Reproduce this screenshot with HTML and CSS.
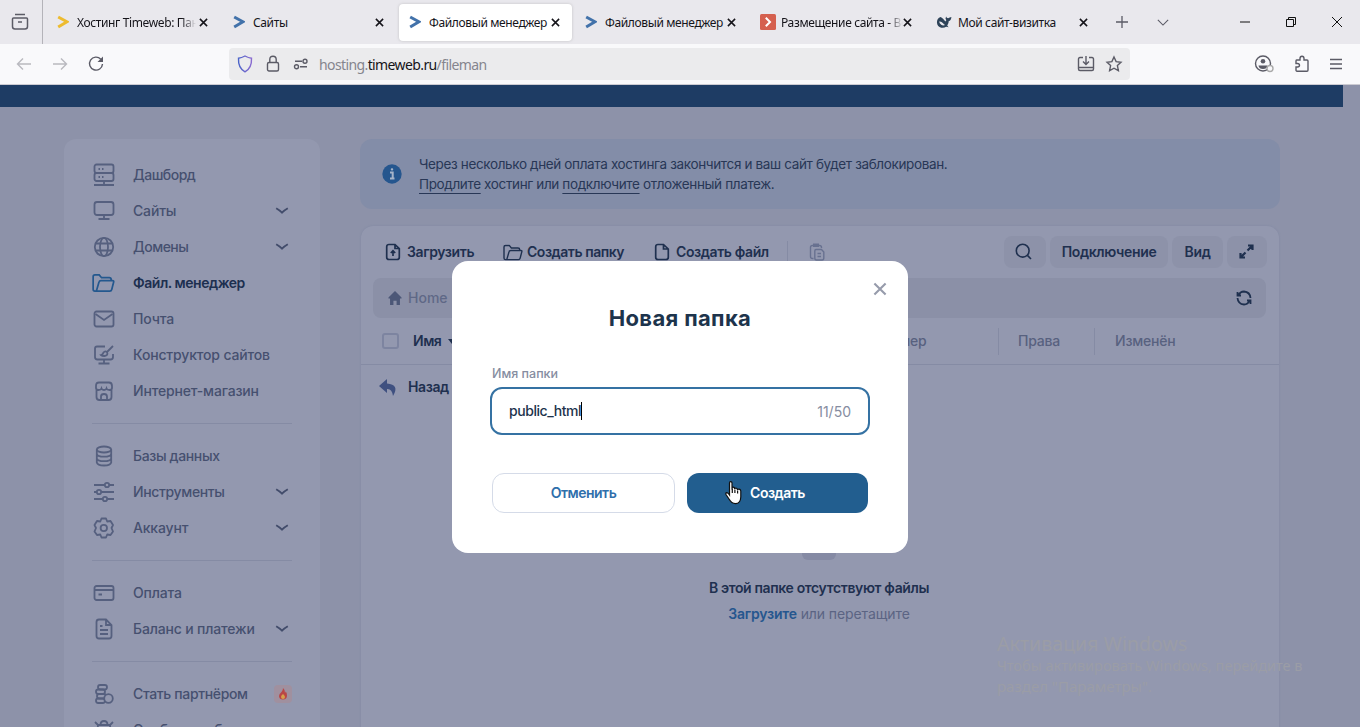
FILE: index.html
```html
<!DOCTYPE html>
<html lang="ru">
<head>
<meta charset="utf-8">
<title>Файловый менеджер</title>
<link rel="stylesheet" href="styles.css">
</head>
<body>
<svg class="sprite" aria-hidden="true">
  <symbol id="x" viewBox="0 0 10 10"><path d="M1 1l8 8M9 1L1 9"/></symbol>
  <symbol id="chev" viewBox="0 0 14 8"><path d="M1.2 1.3Q4.5 3.2 7 5.7Q9.500 3.200 12.800 1.300"/></symbol>
  <symbol id="tw" viewBox="0 0 12 14"><path d="M1.200 2L10 6.800L1.200 12"/></symbol>
  <symbol id="folder" viewBox="0 0 24 20"><path d="M4.500 18.500H3Q1.200 18.500 1.200 16.500V3.500Q1.200 1.500 3 1.500H7.500L10 4.500H18Q20 4.500 20 6.500V7.500M4.500 18.500L7.300 9Q7.700 7.500 9.300 7.500H21.500Q23 7.500 22.600 9L20.600 16.800Q20.200 18.500 18.500 18.500Z"/></symbol>
</svg>

<div class="browser">
  <div class="tabbar">
    <div class="recent"><svg width="18" height="18" viewBox="0 0 18 18"><path d="M4 1.500H14M2.500 5H15.500Q16.500 5 16.500 6V13.500Q16.500 16 14 16H4Q1.500 16 1.500 13.500V6Q1.500 5 2.500 5ZM7 9H11"/></svg></div>
    <div class="tab"><svg class="fav yellow"><use href="#tw"/></svg><span class="tab-title fade">Хостинг Timeweb: Панель</span><svg class="close"><use href="#x"/></svg></div>
    <div class="tab"><svg class="fav"><use href="#tw"/></svg><span class="tab-title">Сайты</span><svg class="close"><use href="#x"/></svg></div>
    <div class="tab active"><svg class="fav"><use href="#tw"/></svg><span class="tab-title">Файловый менеджер</span><svg class="close"><use href="#x"/></svg></div>
    <div class="tab"><svg class="fav"><use href="#tw"/></svg><span class="tab-title">Файловый менеджер</span><svg class="close"><use href="#x"/></svg></div>
    <div class="tab wide"><svg class="fav-red" width="16" height="16" viewBox="0 0 16 16"><rect width="16" height="16" rx="1.500"/><path d="M5.800 3.800L10 8L5.800 12.200"/></svg><span class="tab-title fade">Размещение сайта - Beget</span><svg class="close"><use href="#x"/></svg></div>
    <div class="tab wide"><svg class="fav-whale" width="16" height="13" viewBox="0 0 16 14"><path d="M4.500 1Q.2 2.500.4 7Q.8 11.500 5 12.600Q8 13.200 10.300 11.700L13 12Q11.700 11 11.500 10.300Q13.300 8 13 5.700Q15.500 5 16 1Q14 1.200 12.400 2.500Q10.700 2 10.300.5Q8.800 2.500 10.500 4.700L9.500 6Q7 2 4.500 1Z"/><path class="cut" d="M2.800 6Q5 5.500 7 7.800Q7.800 9 9.200 9.800Q7 11 5 9.500Q3 8 2.800 6Z"/></svg><span class="tab-title">Мой сайт-визитка</span><svg class="close"><use href="#x"/></svg></div>
    <svg class="plus" width="12" height="12" viewBox="0 0 12 12"><path d="M6 0V12M0 6H12"/></svg>
    <svg class="tabs-down" width="12" height="7" viewBox="0 0 14 8"><path d="M1 1L7 7L13 1"/></svg>
    <div class="winbtns">
      <svg width="10" height="10" viewBox="0 0 10 10"><path d="M0 5H10"/></svg>
      <svg width="10" height="10" viewBox="0 0 10 10"><path d="M.5 2.500H7.500V9.500H.5ZM2.500 2.500V.5H9.500V7.500H7.500"/></svg>
      <svg width="10" height="10" viewBox="0 0 10 10"><path d="M0 0L10 10M10 0L0 10"/></svg>
    </div>
  </div>
  <div class="toolbar">
    <svg class="nav dim" width="16" height="16" viewBox="0 0 16 16"><path d="M7 2.500L1.500 8L7 13.500M1.500 8H15"/></svg>
    <svg class="nav dim" width="16" height="16" viewBox="0 0 16 16"><path d="M9 2.500L14.500 8L9 13.500M14.500 8H1"/></svg>
    <svg class="nav" width="16" height="16" viewBox="0 0 16 16"><path d="M12.800 3.200A6.500 6.500 0 1 0 14.500 8"/><path class="solid" d="M15 .5V6H9.500Z"/></svg>
    <div class="urlbar">
      <svg class="shield" width="16" height="18" viewBox="0 0 16 18"><defs><linearGradient id="sg" x2="1"><stop stop-color="#4a63c9"/><stop offset="1" stop-color="#8a6bd0"/></linearGradient></defs><path d="M8 1Q11.500 3 14.500 3.200Q15 13 8 16.800Q1 13 1.500 3.200Q4.500 3 8 1Z"/></svg>
      <svg width="14" height="18" viewBox="0 0 14 18"><rect x="1.500" y="7.500" width="11" height="8.500" rx="1.500"/><path d="M3.800 7.500V4.500Q3.800 1.200 7 1.200Q10.200 1.200 10.200 4.500V7.500"/></svg>
      <svg width="16" height="12" viewBox="0 0 16 12"><path d="M2 3.200H9M7 8.800H14"/><circle cx="12" cy="3.200" r="2"/><circle cx="3.500" cy="8.800" r="2"/></svg>
      <span class="url">hosting.<b>timeweb.ru</b>/fileman</span>
      <svg class="install" width="18" height="16" viewBox="0 0 18 16"><path d="M6 1.500H3Q1.500 1.500 1.500 3V13Q1.500 14.500 3 14.500H15Q16.500 14.500 16.500 13V3Q16.500 1.500 15 1.500H12M1.500 11.500H16.500M9 0V8M6 5.500L9 8.500L12 5.500"/></svg>
      <svg width="16" height="16" viewBox="0 0 16 16"><path d="M8 1L10.100 5.600L15 6.200L11.400 9.600L12.400 14.700L8 12.200L3.600 14.700L4.600 9.600L1 6.200L5.900 5.600Z"/></svg>
    </div>
    <div class="tools">
      <svg width="20" height="18" viewBox="0 0 20 18"><circle cx="9" cy="8.500" r="7.500"/><circle class="solid" cx="9" cy="6.200" r="2.300"/><path class="solid" d="M4.500 10.500H13.500Q13 14 9 14Q5 14 4.500 10.500Z"/><circle class="status" cx="16" cy="13.500" r="3"/></svg>
      <svg width="16" height="18" viewBox="0 0 16 18"><path d="M2.500 5H6V3.500Q6 1.200 8 1.200Q10 1.200 10 3.500V5H13Q14 5 14 6V15Q14 16.200 13 16.200H3Q2 16.200 2 15V12H3.500Q5.500 12 5.500 10.300Q5.500 8.500 3.500 8.500H2V6Q2 5 2.500 5Z"/></svg>
      <svg width="12" height="12" viewBox="0 0 12 12"><path d="M0 1.500H12M0 6H12M0 10.500H12"/></svg>
    </div>
  </div>
</div>

<div class="page">
  <div class="site-header"></div>
  <div class="columns">
    <nav class="sidebar">
      <a class="item tight"><svg class="ico" viewBox="0 0 22 24"><rect x="1.500" y="1.500" width="19" height="8.500" rx="2"/><rect x="1.500" y="10" width="19" height="8" rx="2"/><path d="M11 18V22M1 22H21M5.500 6H7M9 6H10.500M5.500 14H7M9 14H10.500"/></svg><span>Дашборд</span></a>
      <a class="item"><svg class="ico" viewBox="0 0 22 24"><rect x="1.500" y="3" width="19" height="13" rx="2.500"/><path d="M11 16V20M5.500 20H16.500"/></svg><span>Сайты</span><svg class="chev"><use href="#chev"/></svg></a>
      <a class="item tight"><svg class="ico" viewBox="0 0 22 24"><circle cx="11" cy="12" r="9.200"/><ellipse cx="11" cy="12" rx="4" ry="9.200"/><path d="M3 8.500H19M3 15.500H19"/></svg><span>Домены</span><svg class="chev"><use href="#chev"/></svg></a>
      <a class="item current tight"><svg class="ico" viewBox="0 0 24 20"><use href="#folder"/></svg><span>Файл. менеджер</span></a>
      <a class="item"><svg class="ico" viewBox="0 0 22 24"><rect x="1.500" y="4.500" width="19" height="15" rx="2"/><path d="M2.500 7L11 13L19.500 7"/></svg><span>Почта</span></a>
      <a class="item"><svg class="ico" viewBox="0 0 22 24"><path d="M12 3.500H4Q2 3.500 2 5.500V14Q2 16.500 4.500 16.500H17.500Q20 16.500 20 14V11M11 16.500V20.500M5.500 20.500H16.500M20 3L14.500 8.500M11.500 13Q9 13 8 12Q10 11.500 10.500 9.500Q12 7.500 14 9Q15.500 12.500 11.500 13Z"/></svg><span>Конструктор сайтов</span></a>
      <a class="item"><svg class="ico" viewBox="0 0 22 24"><path d="M3.500 11V18Q3.500 21 6.500 21H15.500Q18.500 21 18.500 18V11M8 21V17.500Q8 15 11 15Q14 15 14 17.500V21M3 7Q3 3.500 6 3.500H16Q19 3.500 19 7V9Q19 11 16.500 11Q14 11 13.500 9.500Q13 11 11 11Q9 11 8.500 9.500Q8 11 5.500 11Q3 11 3 9Z"/></svg><span>Интернет-магазин</span></a>
      <hr>
      <a class="item snug"><svg class="ico" viewBox="0 0 22 24"><ellipse cx="11" cy="5.500" rx="7.200" ry="3"/><path d="M3.800 5.500V18.500Q4.500 21.500 11 21.500Q17.500 21.500 18.200 18.500V5.500M3.800 10Q4.500 12.700 11 12.700Q17.500 12.700 18.200 10M3.800 14.500Q4.500 17.200 11 17.200Q17.500 17.200 18.200 14.500"/></svg><span>Базы данных</span></a>
      <a class="item snug"><svg class="ico" viewBox="0 0 22 24"><path d="M1 5H11.500M16.500 5H21M1 12H4M9 12H21M1 19H9.500M14.500 19H21"/><circle cx="14" cy="5" r="2.200"/><circle cx="6" cy="12" r="2.200"/><circle cx="12" cy="19" r="2.200"/></svg><span>Инструменты</span><svg class="chev"><use href="#chev"/></svg></a>
      <a class="item"><svg class="ico" viewBox="0 0 22 24"><path stroke-linejoin="round" d="M8.500 2.500H13L14.200 5.500L17.500 5L20 9L18.500 12L20 15.500L17.500 19L14.200 18.500L13 21.500H8.500L7.300 18.500L4 19L1.500 15.500L3 12L1.500 9L4 5L7.300 5.500Z"/><circle cx="10.800" cy="12" r="3.200"/></svg><span>Аккаунт</span><svg class="chev"><use href="#chev"/></svg></a>
      <hr>
      <a class="item"><svg class="ico" viewBox="0 0 22 24"><rect x="1.500" y="5" width="19" height="14" rx="2"/><path d="M2 9H20M5.500 13.500H9"/></svg><span>Оплата</span></a>
      <a class="item"><svg class="ico" viewBox="0 0 22 24"><path d="M13 2.500H6Q3.500 2.500 3.500 5V19Q3.500 21.500 6 21.500H16Q18.500 21.500 18.500 19V8ZM13 2.500V8H18.500M7 9H9.500M7 13H15M7 17H15"/></svg><span>Баланс и платежи</span><svg class="chev"><use href="#chev"/></svg></a>
      <hr>
      <a class="item snug"><svg class="ico" viewBox="0 0 22 24"><rect x="5" y="3" width="9" height="4.500" rx="2.200"/><rect x="3" y="7.500" width="9" height="4.500" rx="2.200"/><rect x="4" y="12" width="9" height="4.500" rx="2.200"/><rect x="3" y="16.500" width="9" height="4.500" rx="2.200"/><circle class="over" cx="15.500" cy="16.500" r="4.300"/></svg><span>Стать партнёром</span><i class="hot"><svg width="10" height="12" viewBox="0 0 10 12"><path class="fl1" d="M5 0Q5 2.500 3.500 4Q1 5.800 1 8Q1.200 11.500 5 11.500Q9 11.300 9 7.500Q9 5 7.800 3.500L7 5Q7 1.500 5 0Z"/><path class="fl2" d="M5 6Q3 7.500 3 9Q3.200 11 5 11Q7 10.800 7 9Q6.800 7.500 5 6Z"/></svg></i></a>
      <a class="item"><svg class="ico" viewBox="0 0 22 24"><path d="M2 4L5 7H17L20 4M7.500 7Q7.500 3 11 3Q14.500 3 14.500 7M5 7Q3.500 20 11 21Q18.500 20 17 7M1.500 12H5M17 12H20.500M11 11V20"/></svg><span>Сообщить об</span></a>
    </nav>

    <main class="content">
      <div class="notice">
        <svg width="20" height="20" viewBox="0 0 20 20"><circle cx="10" cy="10" r="9.700"/><path d="M8 8.500H10.700V14.500M8 14.500H12.500"/><rect x="8.800" y="4.200" width="2.400" height="2.400" rx="1"/></svg>
        <p>Через несколько дней оплата хостинга закончится и ваш сайт будет заблокирован.<br><u>Продлите</u> хостинг или <u>подключите</u> отложенный платеж.</p>
      </div>
      <section class="files">
        <div class="actions">
          <a class="act upload"><svg width="16" height="18" viewBox="0 0 16 18"><path d="M10 1.500H4Q1.700 1.500 1.700 3.800V14.200Q1.700 16.500 4 16.500H12Q14.300 16.500 14.300 14.200V5.500ZM10 1.500V5.500H14.300M8 13V8M5.800 10L8 7.800L10.200 10"/></svg><span>Загрузить</span></a>
          <a class="act mkdir"><svg width="20" height="17" viewBox="0 0 24 20"><use href="#folder"/></svg><span>Создать папку</span></a>
          <a class="act mkfile"><svg width="16" height="18" viewBox="0 0 16 18"><path d="M9.500 1.500H4Q1.700 1.500 1.700 3.800V14.200Q1.700 16.500 4 16.500H12Q14.300 16.500 14.300 14.200V6ZM9.500 1.500V6H14.300"/></svg><span>Создать файл</span></a>
          <i class="sep"></i>
          <svg class="paste" width="16" height="18" viewBox="0 0 16 18"><path d="M4.500 15.500H3.500Q1.500 15.500 1.500 13.500V4.500Q1.500 2.500 3.500 2.500H10.500Q12.500 2.500 12.500 4.500V5M7 6.500H12.500L14.800 9V15Q14.800 17 13 17H7.500Q5.800 17 5.800 15V8Q5.800 6.500 7 6.500ZM8.500 10.500H12M8.500 13.500H12"/><path class="solid" d="M4 .5H10V4H4Z"/></svg>
          <div class="buttons">
            <button class="btn b1"><svg width="17" height="17" viewBox="0 0 17 17"><circle cx="7.700" cy="7.700" r="6.400"/><path d="M12.400 12.400L16 16"/></svg></button>
            <button class="btn b2">Подключение</button>
            <button class="btn b3">Вид</button>
            <button class="btn b4"><svg class="expand" width="15" height="15" viewBox="0 0 15 15"><path d="M8.500 6.500L13 2M9 1.500H13.500V6M6.500 8.500L2 13M1.500 9V13.500H6"/></svg></button>
          </div>
        </div>
        <div class="path">
          <svg width="14" height="14" viewBox="0 0 14 15"><path d="M7 0L0 7V8H1.700V15H5.300V10.500H8.700V15H12.300V8H14V7Z"/></svg><span>Home</span>
          <svg class="refresh" width="16" height="16" viewBox="0 0 16 16"><path d="M2.500 5.500Q4 1.500 8 1.500Q14 2 14.500 8M13.500 10.500Q12 14.500 8 14.500Q2 14 1.500 8M1.500 2V5.500H5M14.500 14V10.500H11"/></svg>
        </div>
        <div class="thead">
          <i class="check"></i><b>Имя</b><i class="sort"></i>
          <span class="c-size">Размер</span><span class="c-perm">Права</span><span class="c-mod">Изменён</span>
        </div>
        <div class="back"><svg width="18" height="17" viewBox="0 0 18 17"><path d="M8 0L0 7L8 14V10Q13 9.500 14 17Q21 5.500 8 4.500Z"/></svg><span>Назад</span></div>
        <div class="empty">
          <i class="tile"></i>
          <b>В этой папке отсутствуют файлы</b>
          <p><strong>Загрузите</strong> или перетащите</p>
        </div>
      </section>
    </main>
  </div>
</div>

<div class="dialog">
  <svg class="dialog-close"><use href="#x"/></svg>
  <h1>Новая папка</h1>
  <label>Имя папки</label>
  <div class="field"><span class="value">public_html</span><i class="caret"></i><span class="count">11/50</span></div>
  <div class="choices"><button class="cancel">Отменить</button><button class="create">Создать</button></div>
</div>
<svg class="pointer" width="17" height="24" viewBox="0 0 17 24"><path d="M4.500 2Q4.500.7 5.700.7Q7 .7 7 2V8.500L7.300 6.300Q9.300 5.800 9.600 7.500Q11.800 6.500 12.400 8.500Q15.500 7.500 15.800 10V16Q15.500 22.700 10.500 22.700Q6.500 22.500 4 18L1 13.500Q.3 12 1.800 11.700Q3 11.700 4.500 14Z"/><path class="fingers" d="M7.300 8V12M9.900 8.500V12M12.600 9.500V12.500"/></svg>
<div class="watermark"><p class="w1">Активация Windows</p><p class="w2">Чтобы активировать Windows, перейдите в</p><p class="w3">раздел "Параметры".</p></div>
</body>
</html>
```

FILE: styles.css
```css
* { box-sizing: border-box; }
body { margin: 0; width: 1360px; height: 727px; overflow: hidden; background: #8d92a9; font-family: Inter, "Open Sans", sans-serif; position: relative; }
p { margin: 0; }
svg { fill: none; stroke: currentColor; flex: none; overflow: visible; }
.sprite { display: none; }
i { display: block; }
button { border: 0; padding: 0; font-family: inherit; }

/* Browser window */
.browser { font-family: "Noto Sans", sans-serif; color: #15141a; }
.tabbar { height: 44px; background: #e9e8ed; display: flex; align-items: center; }
.recent { width: 43px; height: 44px; border-right: 1px solid #b4b3b9; display: grid; place-items: center; margin-right: 4px; padding-right: 3px; color: #5b5b66; }
.recent svg { stroke-width: 1.5; margin-left: 1px; }
.tab { width: 173px; height: 37px; margin-right: 3px; padding-left: 10px; padding-right: 12px; display: flex; align-items: center; border-radius: 4px; font-size: 12px; }
.tab.active { background: #fff; box-shadow: 0 0 3px #8886; }
.tab.wide { padding-left: 9px; }
.fav { width: 12px; height: 14px; stroke: #4272aa; stroke-width: 3; margin-right: 8px; }
.fav.yellow { stroke: #edbb2f; }
.tab-title { width: 119px; white-space: nowrap; overflow: hidden; letter-spacing: -.37px; padding-top: 1px; }
.tab-title.fade { mask-image: linear-gradient(90deg, #000 88%, transparent); }
.close { width: 9px; height: 9px; margin-left: auto; stroke-width: 1.7; }
.fav-red { margin-right: 5px; }
.fav-red rect { fill: #d5604f; stroke: none; }
.fav-red path { stroke: #fff; stroke-width: 2; }
.fav-whale { margin-right: 6px; fill: #2d4258; stroke: none; }
.fav-whale .cut { fill: #e9e8ed; }
.wide .tab-title { width: 122px; }
.plus { margin-left: 13px; color: #5b5b66; stroke-width: 1.3; }
.tabs-down { margin-left: 29px; color: #5b5b66; stroke-width: 1.3; }
.winbtns { display: flex; gap: 36px; margin-left: auto; margin-right: 18px; color: #111; }
.toolbar { height: 41px; background: #f9f9fb; border-bottom: 1px solid #cccbd2; display: flex; align-items: center; padding: 0 18px 0 16px; color: #5b5b66; }
.nav { margin-right: 20px; }
.nav.dim { color: #b9b9bf; }
.toolbar svg { stroke-width: 1.4; }
.urlbar { width: 901px; height: 32px; margin-left: 105px; border-radius: 4px; background: #ebebed; display: flex; align-items: center; padding: 0 8px; gap: 12px; }
.urlbar .shield { stroke: url(#sg); }
.urlbar svg:nth-child(2) { margin-left: 1px; margin-right: 1px; }
.url { font-size: 14px; color: #85858d; letter-spacing: -.61px; margin-left: -2px; padding-top: 1px; }
.url b { font-weight: 400; color: #15141a; }
.install { margin-left: auto; margin-right: -1px; }
.tools { display: flex; align-items: center; gap: 20px; margin-left: auto; }
.solid { fill: currentColor; stroke: none; }
.status { stroke: #aaa; fill: #f9f9fb; }

/* Site page under the modal shade */
.site-header { width: 1343px; height: 22px; background: #1e3c64; }
.columns { display: flex; gap: 40px; padding: 32px 80px 0 64px; height: 620px; overflow: hidden; align-items: flex-start; }
.sidebar { width: 256px; height: 700px; flex: none; background: #9398af; border-radius: 12px; padding: 18px 28px; color: #56607f; }
.item { height: 36px; display: flex; align-items: center; font-size: 14px; font-weight: 500; color: #46506f; white-space: nowrap; letter-spacing: -.17px; }
.item span { padding-bottom: 2px; }
.item.snug { letter-spacing: -.36px; }
.item.tight { letter-spacing: -.5px; }
.ico { width: 22px; height: 24px; margin-left: 1px; margin-right: 18px; color: #56607f; stroke-width: 1.8; }
.item.current { color: #1d2f4f; font-weight: 600; letter-spacing: -.46px; }
.current .ico { color: #24588e; width: 23px; height: 20px; margin-left: 0; stroke-width: 1.8; }
.chev { width: 14px; height: 8px; margin-left: auto; margin-right: 3px; stroke-width: 1.9; color: #424c6b; }
.sidebar hr { border: 0; height: 1px; background: #858ba4; margin: 14px 0; }
.over { fill: #9398af; }
.hot { width: 18px; height: 18px; border-radius: 4px; background: #a0909f; margin-left: auto; display: grid; place-items: center; }
.fl1 { fill: #ba4646; stroke: none; }
.fl2 { fill: #d6a04c; stroke: none; }
.content { width: 920px; flex: none; }
.notice { height: 70px; border-radius: 12px; background: #838da8; display: flex; align-items: center; padding-left: 22px; font-size: 13.500px; line-height: 20px; color: #283756; }
.notice svg { margin-right: 17px; fill: #25568e; stroke: none; }
.notice svg path { stroke: #a6b4c9; stroke-width: 2; fill: none; }
.notice svg rect { fill: #a6b4c9; }
.notice p { white-space: nowrap; letter-spacing: -.36px; }
.notice u { text-underline-offset: 4px; text-decoration-skip-ink: none; }
.files { margin: 17px 1px 0; height: 600px; background: #9398af; border-radius: 12px; box-shadow: 0 0 2px #7f86a2; padding-top: 10px; color: #1f304f; font-size: 14px; }
.actions { height: 32px; display: flex; align-items: center; padding: 0 12px 0 24px; font-weight: 600; white-space: nowrap; letter-spacing: -.4px; }
.act { display: flex; align-items: center; gap: 6px; }
.act span { padding-bottom: 2px; }
.act svg { stroke-width: 1.7; }
.upload { width: 118px; }
.mkdir { width: 151px; gap: 4px; letter-spacing: -.47px; }
.mkfile { width: 133px; }
.sep { width: 1px; height: 22px; background: #858ba4; margin-right: 21px; }
.paste { color: #687190; stroke-width: 1.4; }
.buttons { display: flex; gap: 4px; margin-left: auto; }
.btn { height: 32px; border-radius: 8px; background: #8d92a9; color: inherit; font-size: 14px; font-weight: 600; display: grid; place-items: center; letter-spacing: -.36px; padding-bottom: 1px; }
.btn svg { stroke-width: 1.6; }
.btn .expand { stroke-width: 2.200; }
.b1 { width: 42px; padding-right: 3px; } .b2 { width: 118px; } .b3 { width: 51px; } .b4 { width: 40px; padding-right: 1px; }
.path { margin: 10px 13px 0 12px; height: 40px; border-radius: 8px; background: #8b90a7; display: flex; align-items: center; padding: 0 14px 0 15px; color: #5f6886; font-weight: 500; }
.path span { padding-bottom: 2px; }
.path svg:first-child { fill: #4c5777; stroke: none; margin-right: 6px; }
.refresh { margin-left: auto; color: #1f304f; stroke-width: 1.8; }
.thead { height: 47px; border-bottom: 1px solid #858ba4; display: flex; align-items: center; padding-left: 21px; color: #58617f; font-weight: 500; letter-spacing: -.2px; }
.thead b { color: #1f304f; font-weight: 600; margin-left: 14px; width: 35px; padding-bottom: 1px; letter-spacing: -.5px; }
.check { width: 17px; height: 16px; border: 2px solid #7d84a0; border-radius: 3px; }
.sort { border: 4px solid transparent; border-top: 5px solid #1f304f; border-bottom: 0; }
.c-size { margin-left: 60px; width: 482px; padding-left: 360px; }
.c-size, .c-perm, .c-mod { height: 27px; line-height: 25px; }
.c-perm { border-left: 1px solid #858ba4; width: 96px; padding-left: 19px; }
.c-mod { border-left: 1px solid #858ba4; padding-left: 20px; }
.back { height: 44px; display: flex; align-items: center; gap: 11px; padding-left: 18px; font-weight: 600; letter-spacing: -.4px; }
.back svg { fill: #3f5080; stroke: none; }
.back span { padding-bottom: 1px; }
.empty { text-align: center; padding-top: 117px; padding-right: 2px; font-size: 14px; color: #5b6483; }
.tile { width: 34px; height: 34px; border-radius: 6px; background: #858aa4; margin: 0 auto 18px; }
.empty b { display: block; height: 20px; line-height: 20px; color: #1f304f; font-weight: 600; letter-spacing: -.37px; }
.empty p { margin-top: 6px; line-height: 20px; letter-spacing: -.1px; }
.empty strong { color: #25568e; font-weight: 600; letter-spacing: -.2px; }

/* New folder dialog, over the page */
.dialog { position: absolute; left: 452px; top: 261px; width: 456px; height: 292px; border-radius: 16px; background: #fff; padding: 40px; color: #1d344c; }
.dialog-close { position: absolute; right: 21px; top: 21px; width: 14px; height: 14px; color: #969bab; stroke-width: 1.5; }
.dialog h1 { margin: 0; font-size: 22px; line-height: 34px; font-weight: 700; text-align: center; letter-spacing: .35px; }
.dialog label { display: block; margin-top: 31px; height: 16px; line-height: 16px; font-size: 12.500px; font-weight: 500; color: #868da1; }
.field { margin: 5px -2px 0; height: 48px; border: 2px solid #3572a3; border-radius: 12px; display: flex; align-items: center; padding: 0 17px; font-size: 14px; }
.value { font-weight: 500; letter-spacing: -.45px; padding-bottom: 1px; }
.caret { width: 1px; height: 18px; background: #000; }
.count { margin-left: auto; color: #868da1; }
.choices { display: flex; gap: 12px; margin-top: 38px; }
.choices button { height: 40px; border-radius: 12px; font-size: 14px; font-weight: 600; letter-spacing: -.5px; padding-bottom: 1px; }
.choices .cancel { width: 183px; background: #fff; border: 1px solid #d5dbe8; color: #2f6fab; }
.choices .create { width: 181px; background: #225e8f; color: #fff; }
.pointer { position: absolute; left: 725px; top: 481px; fill: #fff; stroke: #111; stroke-width: 1.2; }

/* System watermark, over everything */
.watermark { position: absolute; left: 997px; top: 632px; color: #9b9da6; font-family: "Noto Sans", sans-serif; white-space: nowrap; font-size: 14.500px; line-height: 21px; }
.w1 { font-size: 19.600px; line-height: 23px; }
.w3 { font-size: 15px; line-height: 20px; }
```
